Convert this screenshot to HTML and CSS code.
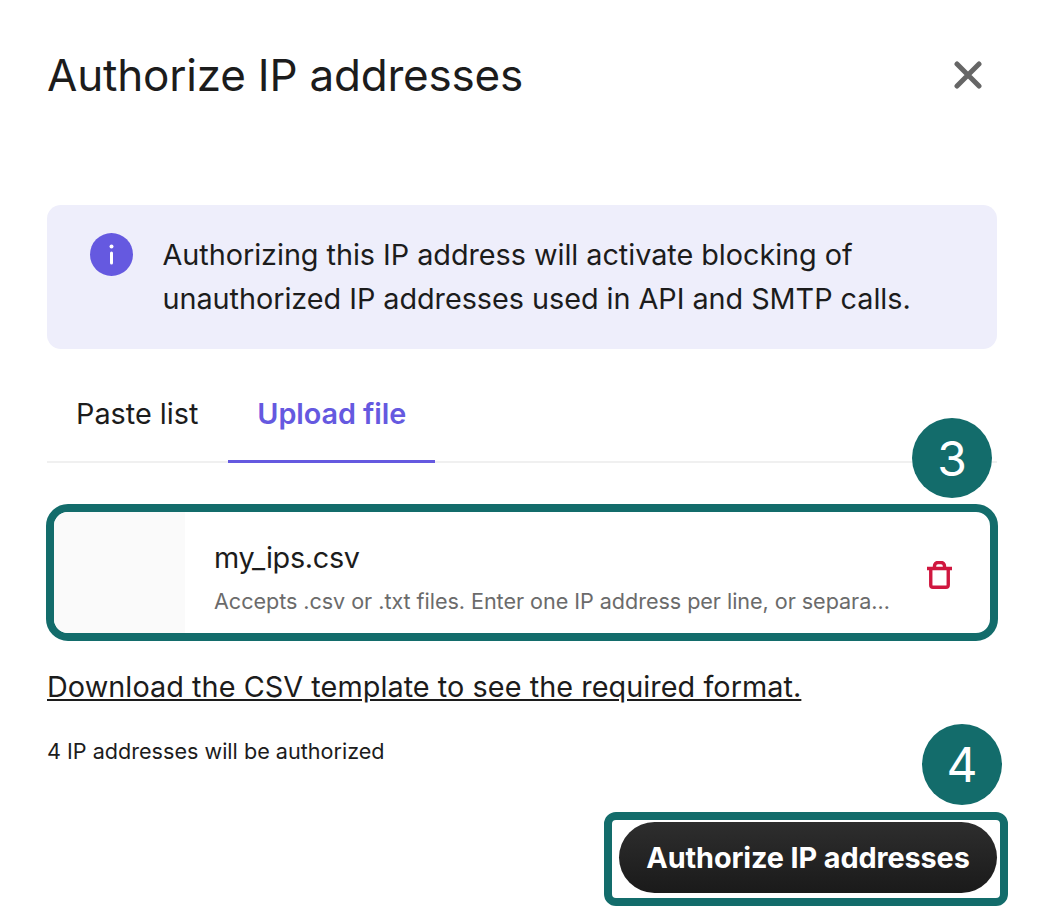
FILE: index.html
```html
<!DOCTYPE html>
<html lang="en">
<head>
<meta charset="utf-8">
<title>Authorize IP addresses</title>
<link rel="stylesheet" href="styles.css">
</head>
<body>
<main class="dialog">
  <header class="head">
    <h1 class="title">Authorize IP addresses</h1>
    <button class="close" aria-label="Close">
      <svg width="28" height="28" viewBox="0 0 28 28"><path d="M3 3L25 25M25 3L3 25" stroke="#666" stroke-width="5" stroke-linecap="round" fill="none"/></svg>
    </button>
  </header>
  <section class="alert">
    <svg class="alert-icon" width="43" height="43" viewBox="0 0 43 43"><circle cx="21.5" cy="21.5" r="21.5" fill="#6559e0"/><circle cx="21.5" cy="13.5" r="2" fill="#fff"/><rect x="20" y="18.5" width="3" height="13" rx="1.5" fill="#fff"/></svg>
    <p class="alert-text">Authorizing this IP address will activate blocking of<br>unauthorized IP addresses used in API and SMTP calls.</p>
  </section>
  <nav class="tabs">
    <span class="tab">Paste list</span>
    <span class="tab tab-active">Upload file</span>
  </nav>
  <div class="file-wrap">
    <span class="badge badge-3">3</span>
    <div class="file">
      <div class="thumb"></div>
      <div class="file-info">
        <div class="file-name">my_ips.csv</div>
        <div class="file-hint">Accepts .csv or .txt files. Enter one IP address per line, or separated by commas.</div>
      </div>
      <svg class="trash" width="25" height="28" viewBox="0 0 25 28"><path d="M0 7.5H25M3.75 7.5V24a2.25 2.25 0 0 0 2.25 2.25H19A2.25 2.25 0 0 0 21.25 24V7.5M7.5 7V5A3.5 3.5 0 0 1 11 1.5h3A3.5 3.5 0 0 1 17.5 5v2" stroke="#d0173f" stroke-width="3.4" fill="none"/></svg>
    </div>
  </div>
  <a class="link" href="#">Download the CSV template to see the required format.</a>
  <p class="count">4 IP addresses will be authorized</p>
  <footer class="foot">
    <span class="badge badge-4">4</span>
    <div class="highlight"><button class="primary">Authorize IP addresses</button></div>
  </footer>
</main>
</body>
</html>
```
FILE: styles.css
```css
* { box-sizing: border-box; }
html, body { margin: 0; height: 912px; overflow: hidden; background: #fff; }
body { font-family: Inter, "Liberation Sans", sans-serif; color: #1c1c1c; }
.dialog { padding: 0 41px 0 47px; position: relative; }
.head { display: flex; justify-content: space-between; align-items: center; height: 150px; }
.title { margin: 0; font-family: Inter, sans-serif; font-size: 44px; font-weight: 400; letter-spacing: -0.2px; }
.close { border: 0; background: none; padding: 0; margin-right: 15px; display: flex; }
.alert { margin-top: 55px; height: 144px; background: #eeeefb; border-radius: 14px; display: flex; padding: 28px 0 0 43px; }
.alert-icon { flex: none; }
.alert-text { margin: 0 0 0 29.5px; font-size: 28.8px; line-height: 44px; letter-spacing: -0.04px; }
.tabs { display: flex; height: 114px; border-bottom: 2px solid #f0f0f0; }
.tab { padding: 47px 30px 0 29px; height: 114px; font-size: 28.8px; line-height: 36px; }
.tab-active { color: #6559e0; font-weight: 600; border-bottom: 3px solid #6559e0; padding: 47px 29px 0 30px; width: 207px; margin-left: 0; letter-spacing: -0.08px; text-indent: -1px; }
.file-wrap { position: relative; margin: 41px 0 0 -1px; }
.file { display: flex; align-items: center; width: 952px; height: 137px; border: 8px solid #136c6b; border-radius: 22px; overflow: hidden; }
.thumb { flex: none; width: 131px; height: 100%; background: #fafafa; }
.file-info { flex: 1; min-width: 0; padding: 10px 34px 0 29px; }
.file-name { font-size: 28.8px; line-height: 36px; margin-bottom: 10px; letter-spacing: -0.3px; }
.file-hint { font-size: 21.6px; line-height: 30px; color: #6b6b6b; white-space: nowrap; overflow: hidden; text-overflow: ellipsis; letter-spacing: -0.05px; }
.trash { flex: none; margin: 4px 38px 0 0; }
.badge { position: absolute; width: 80px; height: 80px; border-radius: 50%; background: #136c6b; color: #fff; font-size: 48px; display: flex; align-items: center; justify-content: center; }
.badge-3 { top: -86px; right: 5px; }
.link { display: block; margin-top: 28px; font-size: 28.8px; line-height: 36px; color: #1c1c1c; text-decoration: underline; letter-spacing: 0.06px; }
.count { margin: 31px 0 0; font-size: 21.6px; line-height: 30px; }
.foot { position: relative; display: flex; justify-content: flex-end; margin: 46px -11px 0 0; }
.badge-4 { right: 6px; top: -88px; height: 81px; }
.highlight { width: 404px; height: 94px; border: 8px solid #136c6b; border-radius: 12px; padding: 2px 3px 0 7px; }
.primary { display: block; width: 378px; height: 71px; border: 0; border-radius: 36px; background: linear-gradient(#2e2e2e, #1a1a1a); color: #fff; font-family: inherit; font-size: 28.8px; font-weight: 700; letter-spacing: -0.1px; }
```
